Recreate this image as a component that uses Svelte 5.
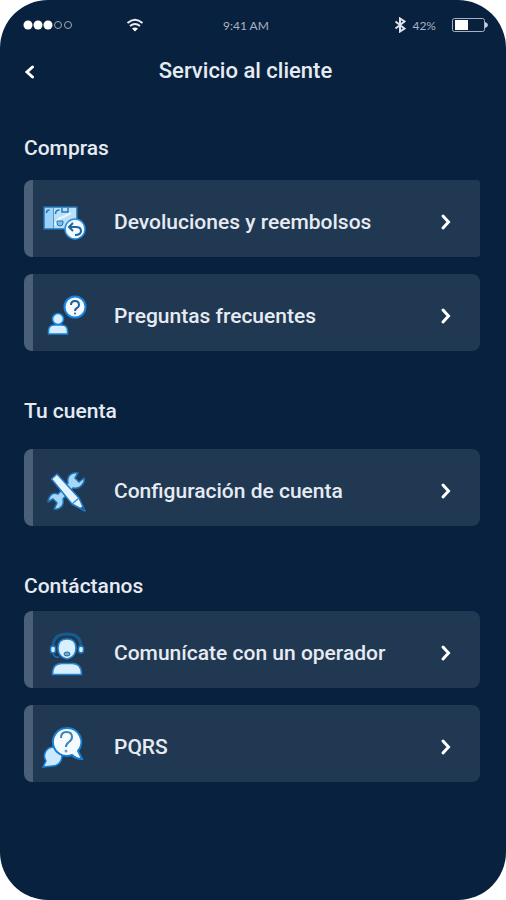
<script lang="ts">
  type Item = { label: string; icon: string; square?: boolean };
  type Section = { title: string; spacing: string; items: Item[] };

  const sections: Section[] = [
    {
      title: "Compras",
      spacing: "normal",
      items: [
        { label: "Devoluciones y reembolsos", icon: "returns", square: true },
        { label: "Preguntas frecuentes", icon: "faq" },
      ],
    },
    {
      title: "Tu cuenta",
      spacing: "loose",
      items: [{ label: "Configuración de cuenta", icon: "settings" }],
    },
    {
      title: "Contáctanos",
      spacing: "tight",
      items: [
        { label: "Comunícate con un operador", icon: "operator" },
        { label: "PQRS", icon: "pqrs" },
      ],
    },
  ];
</script>

{#snippet itemIcon(name: string)}
  <svg class="icon" viewBox="0 0 48 48" aria-hidden="true">
    {#if name === "returns"}
      <path d="M3 9h33v22H3z" fill="#b9e0fb" stroke="#1d70b5" stroke-width="1.5" />
      <path d="M4 10h8v20H4z" fill="#9dd2f8" />
      <path d="M12.500 10v20" stroke="#4b9ad4" />
      <path d="M5.500 15q0-3 3-3M14.500 16q0-4 4-4M21 10v4h6v-4" fill="none" stroke="#2878b5" stroke-width="1.5" />
      <path d="M14 27q2-6 8-8l8-4" fill="none" stroke="#e7f6ff" stroke-width="2" />
      <path d="M16 23h6v2q0 3-3 3t-3-3z" fill="#7dbbe8" stroke="#2878b5" />
      <circle cx="34" cy="31" r="10" fill="#f2faff" stroke="#2b8fdc" stroke-width="1.5" />
      <path d="M32 25l-4 4 4 4M28.500 29H35q5 0 5 4 0 4-6 4" fill="none" stroke="#1d659c" stroke-width="2" />
    {:else if name === "faq"}
      <circle cx="34" cy="15" r="10.500" fill="#f4faff" stroke="#1684e0" stroke-width="2" />
      <path d="M30 13q0-4 4-4t4 4q0 2-2 3t-2 3" fill="none" stroke="#235f91" stroke-width="2" />
      <circle cx="34" cy="21.500" r="1" fill="#235f91" />
      <circle cx="17" cy="27" r="5.500" fill="#d6eeff" stroke="#1684d8" stroke-width="1.5" />
      <path d="M7.500 42v-3q0-6 6-6h7q6 0 6 6v3z" fill="#d6eeff" stroke="#1684d8" stroke-width="1.5" />
    {:else if name === "settings"}
      <path
        d="M37 6q-6-1-9 3-2 3-1 7L17 27q-5-2-8 2-2 3-2 6l5-3 4 4-3 6q5 1 8-3 2-3 1-7l10-11q6 1 9-3 3-3 2-7l-5 4-4-4z"
        fill="#a5d5f7"
        stroke="#1c6fb4"
        stroke-width="1.5"
        stroke-linejoin="round"
      />
      <path d="M10.500 12l5.500-5 22 24 6 13-13-7z" fill="#e4f4ff" stroke="#1e7dcd" stroke-width="1.5" stroke-linejoin="round" />
      <path d="M31 37l7-6" stroke="#3b91d1" stroke-width="1.5" />
      <path d="M39 41l3-2 2 5z" fill="#1767a8" />
    {:else if name === "operator"}
      <path d="M12 18q0-13 14-13t14 13" fill="none" stroke="#155c93" stroke-width="3" />
      <path d="M26 10q9 0 9 9 0 9-9 11-9-2-9-11 0-9 9-9z" fill="#d8efff" stroke="#2582c8" stroke-width="1.5" />
      <rect x="9.500" y="17" width="5" height="7" rx="2.500" fill="#d8efff" stroke="#1976bd" stroke-width="1.5" />
      <rect x="37.500" y="17" width="5" height="7" rx="2.500" fill="#d8efff" stroke="#1976bd" stroke-width="1.5" />
      <path d="M12 24q1 5 6 4" fill="none" stroke="#1e71af" stroke-width="1.5" />
      <ellipse cx="26" cy="25" rx="3" ry="2" fill="#7ba8cc" stroke="#1c679f" />
      <path d="M11.500 45.500q0-11 9-11h11q9 0 9 11z" fill="#d8efff" stroke="#2383ce" stroke-width="1.5" />
    {:else}
      <path d="M12 24a9 9 0 0 0-7 14l-3 6 9-1a9 9 0 1 0 1-19z" fill="#cce9ff" stroke="#1680d7" stroke-width="1.5" />
      <path d="M25 5a14 14 0 1 0 6 27q4 4 10 4l-4-8A14 14 0 0 0 25 5z" fill="#f5faff" stroke="#1680d7" stroke-width="2" />
      <path d="M20 15q0-6 5.500-6t5.500 5q0 3-3 5t-3 5" fill="none" stroke="#3a83ba" stroke-width="2" />
      <circle cx="25" cy="28" r="1.500" fill="#6e9ed0" />
    {/if}
  </svg>
{/snippet}

<main class="screen">
  <div class="status">
    <svg class="signal" viewBox="0 0 50 10" aria-hidden="true">
      <circle cx="5" cy="5" r="4.500" fill="#fff" />
      <circle cx="15" cy="5" r="4.500" fill="#fff" />
      <circle cx="25" cy="5" r="4.500" fill="#fff" />
      <circle cx="35" cy="5" r="3.500" fill="none" stroke="#a2aab9" />
      <circle cx="45" cy="5" r="3.500" fill="none" stroke="#a2aab9" />
    </svg>
    <svg class="wifi" viewBox="0 0 18 14" aria-hidden="true">
      <path d="M1.500 5q7.500-6.500 15 0M4 8q5-4 10 0" fill="none" stroke="#e9edf3" stroke-width="2" />
      <path d="M6 10.500q3-2 6 0L9 13.500z" fill="#fff" />
    </svg>
    <span class="time">9:41 AM</span>
    <svg class="bluetooth" viewBox="0 0 12 16" aria-hidden="true">
      <path d="M1.500 4.500l9 7L6 14.500v-13l4.500 3-9 7" fill="none" stroke="#dfe4ec" stroke-width="2" />
    </svg>
    <span class="percent">42%</span>
    <svg class="battery" viewBox="0 0 36 15" aria-hidden="true">
      <rect x="0.500" y="0.500" width="32" height="13" rx="2" fill="none" stroke="#a9b2c2" />
      <path d="M3 2h13v10H3z" fill="#fff" />
      <path d="M33 4q3 1 3 3t-3 3z" fill="#c9cfda" />
    </svg>
  </div>

  <header class="topbar">
    <button class="back" type="button" aria-label="Volver">
      <svg viewBox="0 0 12 16" aria-hidden="true">
        <path d="M9.500 4L4 9l5.500 5" fill="none" stroke="#fff" stroke-width="3" stroke-linecap="round" />
      </svg>
    </button>
    <h1>Servicio al cliente</h1>
  </header>

  {#each sections as section}
    <section class={section.spacing}>
      <h2>{section.title}</h2>
      <div class="list">
        {#each section.items as item}
          <button class="card" class:square={item.square} type="button">
            {@render itemIcon(item.icon)}
            <span class="label">{item.label}</span>
            <svg class="chevron" viewBox="0 0 12 20" aria-hidden="true">
              <path d="M3 4l5.500 6L3 16" fill="none" stroke="#fff" stroke-width="3" stroke-linecap="round" />
            </svg>
          </button>
        {/each}
      </div>
    </section>
  {/each}
</main>

<style>
  :global(body) {
    margin: 0;
    background: #fff;
  }

  .screen {
    box-sizing: border-box;
    min-height: 100vh;
    padding-bottom: 48px;
    border-radius: 48px;
    background: #08213e;
    color: #e6ebf2;
    font-family: Roboto, sans-serif;
  }

  .status {
    display: flex;
    align-items: center;
    height: 50px;
    padding: 0 18px 0 23px;
    color: #a9b2c2;
    font-family: Lato, sans-serif;
    font-size: 12px;
  }

  .signal {
    width: 50px;
    height: 10px;
  }

  .wifi {
    width: 18px;
    height: 14px;
    margin-left: 53px;
  }

  .time {
    margin-left: 79px;
  }

  .bluetooth {
    width: 12px;
    height: 16px;
    margin-left: auto;
  }

  .percent {
    margin: 0 16px 0 6px;
  }

  .battery {
    width: 36px;
    height: 15px;
  }

  .topbar {
    display: flex;
    align-items: center;
    height: 42px;
    padding: 0 50px 0 23px;
  }

  .back {
    display: flex;
    padding: 0;
    border: none;
    background: none;
    cursor: pointer;
  }

  .back svg {
    width: 12px;
    height: 16px;
  }

  h1 {
    flex: 1;
    margin: 0;
    font-size: 22px;
    font-weight: 500;
    line-height: 28px;
    text-align: center;
  }

  section {
    padding: 0 26px 0 24px;
    margin-top: 48px;
  }

  .topbar + section {
    margin-top: 44px;
  }

  h2 {
    margin: 0 0 20px;
    font-size: 21px;
    font-weight: 500;
    line-height: 24px;
  }

  .loose h2 {
    margin-bottom: 26px;
  }

  .tight h2 {
    margin-bottom: 13px;
  }

  .list {
    display: flex;
    flex-direction: column;
    gap: 17px;
  }

  .card {
    box-sizing: border-box;
    display: flex;
    align-items: center;
    width: 100%;
    height: 77px;
    padding: 6px 28px 0 8px;
    border: none;
    border-left: 9px solid #4a6078;
    border-radius: 8px;
    background: #203852;
    color: inherit;
    font-family: inherit;
    font-size: 21px;
    font-weight: 500;
    text-align: left;
    cursor: pointer;
  }

  .card.square {
    border-radius: 8px 3px 3px 8px;
  }

  .icon {
    flex: none;
    width: 48px;
    height: 48px;
  }

  .label {
    flex: 1;
    margin-left: 25px;
  }

  .chevron {
    flex: none;
    width: 12px;
    height: 20px;
  }
</style>
